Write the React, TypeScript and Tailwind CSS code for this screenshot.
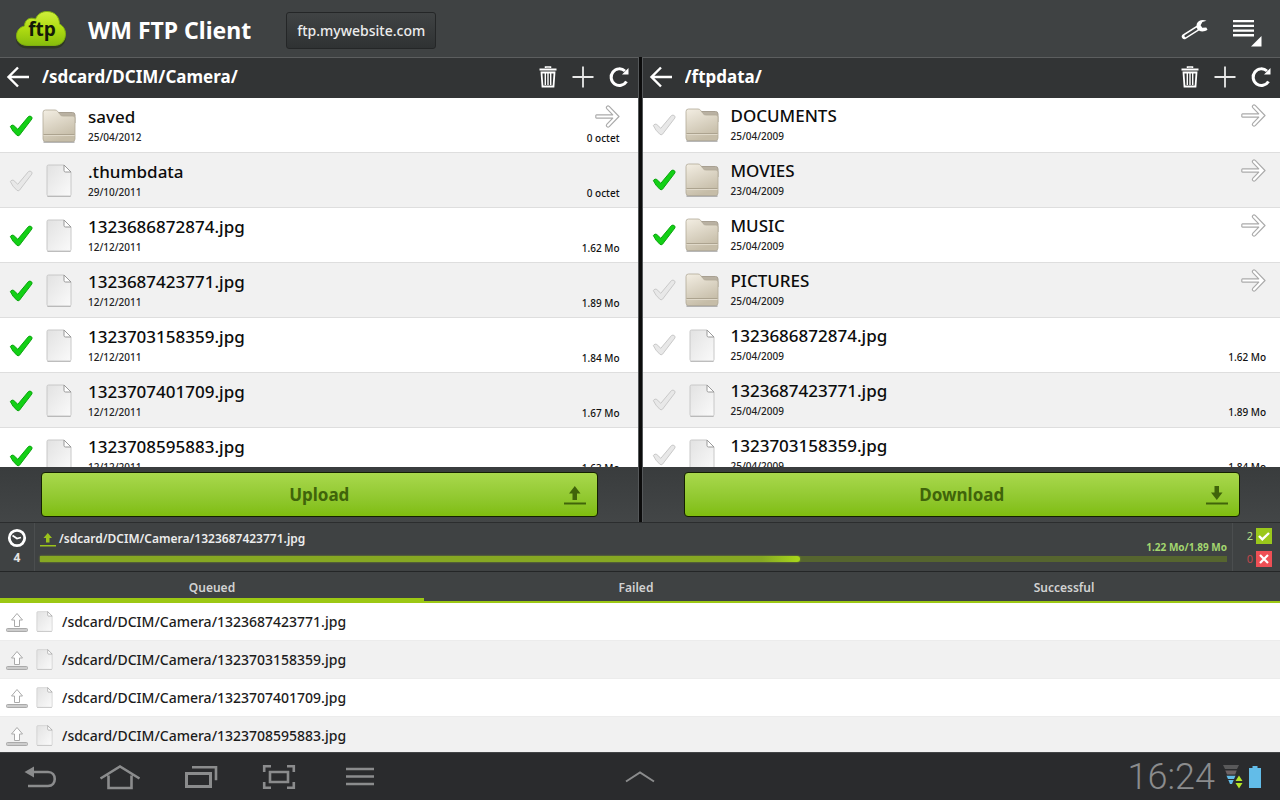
import { useState } from 'react';
import type { ReactNode } from 'react';

type Entry = {
  name: string;
  date: string;
  size?: string;
  folder?: boolean;
  checked?: boolean;
};

const localFiles: Entry[] = [
  { name: 'saved', date: '25/04/2012', size: '0 octet', folder: true, checked: true },
  { name: '.thumbdata', date: '29/10/2011', size: '0 octet' },
  { name: '1323686872874.jpg', date: '12/12/2011', size: '1.62 Mo', checked: true },
  { name: '1323687423771.jpg', date: '12/12/2011', size: '1.89 Mo', checked: true },
  { name: '1323703158359.jpg', date: '12/12/2011', size: '1.84 Mo', checked: true },
  { name: '1323707401709.jpg', date: '12/12/2011', size: '1.67 Mo', checked: true },
  { name: '1323708595883.jpg', date: '12/12/2011', size: '1.63 Mo', checked: true },
];

const remoteFiles: Entry[] = [
  { name: 'DOCUMENTS', date: '25/04/2009', folder: true },
  { name: 'MOVIES', date: '23/04/2009', folder: true, checked: true },
  { name: 'MUSIC', date: '25/04/2009', folder: true, checked: true },
  { name: 'PICTURES', date: '25/04/2009', folder: true },
  { name: '1323686872874.jpg', date: '25/04/2009', size: '1.62 Mo' },
  { name: '1323687423771.jpg', date: '25/04/2009', size: '1.89 Mo' },
  { name: '1323703158359.jpg', date: '25/04/2009', size: '1.84 Mo' },
];

const queue = [
  '/sdcard/DCIM/Camera/1323687423771.jpg',
  '/sdcard/DCIM/Camera/1323703158359.jpg',
  '/sdcard/DCIM/Camera/1323707401709.jpg',
  '/sdcard/DCIM/Camera/1323708595883.jpg',
];

function Gradients() {
  return (
    <svg width="0" height="0" className="absolute" aria-hidden="true">
      <defs>
        <linearGradient id="cloud" x1="0" y1="0" x2="0" y2="1">
          <stop offset="0" stopColor="#cfee3c" />
          <stop offset="0.5" stopColor="#b0dc12" />
          <stop offset="1" stopColor="#86bd0c" />
        </linearGradient>
        <linearGradient id="folder" x1="0" y1="0" x2="0.4" y2="1">
          <stop offset="0" stopColor="#f3eee3" />
          <stop offset="1" stopColor="#c6bda8" />
        </linearGradient>
        <linearGradient id="paper" x1="0" y1="0" x2="1" y2="1">
          <stop offset="0" stopColor="#e2e2e2" />
          <stop offset="1" stopColor="#fafafa" />
        </linearGradient>
      </defs>
    </svg>
  );
}

function Logo() {
  return (
    <svg width="54" height="42" viewBox="0 0 54 42" aria-hidden="true">
      <path
        d="M14 37.500C6 37.500 2 33 2 27.500c0-5 3-9 8-10 0-6 5-9.500 11-7.500C24 5 28 2.500 33 2.500c8 0 13 5.500 13 12.500 4 2 6 6 6 10.500C52 33 47 37.500 40 37.500Z"
        fill="#1f2d05"
        opacity="0.5"
        transform="translate(0 2)"
      />
      <path
        d="M14 36.500C6 36.500 2.500 32 2.500 27c0-5 3-9 8-10 0-6 5-9.500 11-7C24 4.500 28 2.500 33 2.500c8 0 12.500 5.500 12.500 12.500 4 2 6 6 6 10C51.500 32 47 36.500 40 36.500Z"
        fill="url(#cloud)"
        stroke="#7fae10"
      />
      <text
        x="28"
        y="27"
        textAnchor="middle"
        fontSize="19"
        fontWeight="700"
        fill="#141a08"
        className="font-['Open_Sans',sans-serif]"
      >
        ftp
      </text>
    </svg>
  );
}

function WrenchIcon() {
  return (
    <svg width="28" height="22" viewBox="0 0 28 22" fill="none" aria-hidden="true">
      <path d="M4.500 17.500 18 9" stroke="#fff" strokeWidth="5.400" strokeLinecap="round" />
      <path d="M5.500 17 16.500 10" stroke="#3f4243" strokeWidth="2.200" strokeLinecap="round" />
      <path
        d="M26.500 1.800C22.500 0 18 1.300 16.800 4.800c-.7 2.500.1 5.200 2.200 6.700 2.400 1.500 6 1 8.500-.7l-1.200-2.300-4 .3-1.700-2.600 1.800-3.200Z"
        fill="#fff"
      />
    </svg>
  );
}

function MenuIcon() {
  return (
    <svg width="30" height="29" viewBox="0 0 30 29" fill="#fff" aria-hidden="true">
      <path d="M1 2h21v2.300H1zM1 6.700h21V9H1zM1 11.400h21v2.300H1zM1 16.100h21v2.300H1z" />
      <path d="M29.500 18v10.500H19Z" />
    </svg>
  );
}

function BackArrow() {
  return (
    <svg width="24" height="22" viewBox="0 0 24 22" fill="none" stroke="#fff" strokeWidth="2.400" aria-hidden="true">
      <path d="M12 1.500 2.500 11l9.500 9.500M2.500 11H23" />
    </svg>
  );
}

function TrashIcon() {
  return (
    <svg width="18" height="22" viewBox="0 0 18 22" fill="none" stroke="#fff" aria-hidden="true">
      <path d="M6.500 2V1h5v1" strokeWidth="1.500" />
      <path d="M.5 3.500h17" strokeWidth="2" />
      <path d="M2.500 6.500 3.500 20.500h11L15.500 6.500Z" strokeWidth="1.800" />
      <path d="M6.300 7v12M9 7v12M11.700 7v12" strokeWidth="1.400" />
    </svg>
  );
}

function PlusIcon() {
  return (
    <svg width="22" height="22" viewBox="0 0 22 22" stroke="#e8e8e8" strokeWidth="1.800" aria-hidden="true">
      <path d="M11 .5v21M.5 11h21" />
    </svg>
  );
}

function ReloadIcon() {
  return (
    <svg width="20" height="22" viewBox="0 0 20 22" fill="none" aria-hidden="true">
      <path d="M17.500 15.500A8.300 8.300 0 1 1 16 5" stroke="#fff" strokeWidth="3" />
      <path d="M19.500 2V8.500H13Z" fill="#fff" />
    </svg>
  );
}

function FolderIcon() {
  return (
    <svg width="34" height="34" viewBox="0 0 34 34" aria-hidden="true">
      <path d="M1.500 33h31" stroke="#777" opacity="0.7" strokeWidth="1.500" />
      <path d="M12 3.500h18.500A2.500 2.500 0 0 1 33 6v8H12Z" fill="#b9b1a2" stroke="#a8a092" />
      <path
        d="M1 3.500A2.500 2.500 0 0 1 3.500 1H13q1.500 0 2.500 1.200l2.500 3.300q1 1.500 3 1.500h10a2 2 0 0 1 2 2v21a2.500 2.500 0 0 1-2.500 2.500h-27A2.500 2.500 0 0 1 1 30Z"
        fill="url(#folder)"
        stroke="#b1a998"
        strokeWidth="0.800"
      />
      <path d="M1.500 25.500h31" stroke="#aca38f" />
      <path d="M1.500 26.500h31" stroke="#e0d9c9" />
    </svg>
  );
}

function FileIcon({ small = false }: { small?: boolean }) {
  return (
    <svg
      width={small ? 17 : 26}
      height={small ? 21 : 33}
      viewBox="0 0 26 33"
      aria-hidden="true"
    >
      <path d="M1.500 32.300h23" stroke="#777" opacity="0.7" />
      <path
        d="M1 2.500A1.500 1.500 0 0 1 2.500 1H18l7 7v22.500a1.500 1.500 0 0 1-1.500 1.500h-21A1.500 1.500 0 0 1 1 30.500Z"
        fill="url(#paper)"
        stroke="#c8c8c8"
      />
      <path d="M18 1v5.500A1.500 1.500 0 0 0 19.500 8H25Z" fill="#fff" stroke="#999" />
    </svg>
  );
}

function OpenArrow() {
  return (
    <svg width="25" height="23" viewBox="0 0 26 24" fill="#fff" stroke="#aaa" strokeWidth="1.200" aria-hidden="true">
      <path
        d="M1.500 10.300h17l-6.300-6.600q-.9-1.300.2-2.300t2.400 0L25 12 14.800 22.600q-1.300 1-2.400 0t-.2-2.300l6.300-6.600h-17a.7.7 0 0 1-.7-.7v-2a.7.7 0 0 1 .7-.7Z"
        strokeLinejoin="round"
      />
    </svg>
  );
}

function Tick({ label, checked }: { label: string; checked: boolean }) {
  return (
    <label className="grid w-6 shrink-0 cursor-pointer">
      <input
        type="checkbox"
        aria-label={label}
        defaultChecked={checked}
        className="peer col-start-1 row-start-1 size-6 appearance-none"
      />
      <svg
        viewBox="0 0 24 24"
        className="col-start-1 row-start-1 size-6 fill-[#e8e8e8] stroke-[#c9c9c9] peer-checked:fill-[#13d016] peer-checked:stroke-[#0aa50d]"
        aria-hidden="true"
      >
        <path
          d="M1.300 12.500q1.700-2.400 3.500-1l4 3.800L19.500 2.500q1.500-1 3 .3 1 1 .3 2.300L10.500 21.200q-1.400 1.200-2.700 0Q3.500 17.500 1.300 12.500Z"
          strokeWidth="1"
          strokeLinejoin="round"
        />
      </svg>
    </label>
  );
}

function IconButton({ label, children, className = '' }: { label: string; children: ReactNode; className?: string }) {
  return (
    <button type="button" aria-label={label} className={`flex shrink-0 cursor-pointer items-center justify-center ${className}`}>
      {children}
    </button>
  );
}

function FileRow({ entry, inset }: { entry: Entry; inset: string }) {
  return (
    <li className={`flex h-[55px] shrink-0 border-b border-[#dedede] bg-white pl-[9px] even:bg-[#f1f1f1] ${inset}`}>
      <div className="flex items-center">
        <Tick label={entry.name} checked={!!entry.checked} />
        <span className="ml-2 flex w-9 justify-center">{entry.folder ? <FolderIcon /> : <FileIcon />}</span>
      </div>
      <div className="ml-[11px] min-w-0 flex-1 pt-[5px]">
        <div className="truncate text-[17px] leading-[26px] font-medium text-[#0c0c0c]">{entry.name}</div>
        <div className="text-[10px] leading-[14px] font-medium text-[#222]">{entry.date}</div>
      </div>
      <div className="flex flex-col items-end pt-[6px]">
        <div className="h-[26px]">
          {entry.folder && (
            <IconButton label={`Open ${entry.name}`}>
              <OpenArrow />
            </IconButton>
          )}
        </div>
        <span className="text-[10px] leading-[14px] font-medium text-[#111]">{entry.size}</span>
      </div>
    </li>
  );
}

function TransferArrow({ down = false }: { down?: boolean }) {
  return (
    <svg width="24" height="20" viewBox="0 0 24 20" className="fill-[#40640a]" aria-hidden="true">
      {down ? <path d="M9.500 1h4.500v6.500H17.500L11.800 15 6 7.500h3.500Z" /> : <path d="M9.500 15h4.500V8.500h3.500L11.800 1 6 8.500h3.500Z" />}
      <path d="M1 17.500h22v2H1z" />
    </svg>
  );
}

function Pane({ path, files, action, inset }: { path: string; files: Entry[]; action: 'Upload' | 'Download'; inset: string }) {
  return (
    <section className="flex min-w-0 flex-1 flex-col">
      <header className="flex h-[41px] shrink-0 items-center border-t border-[#5c5e5f] bg-[#323435] pr-[9px] pb-[3px] pl-[6px]">
        <IconButton label="Back">
          <BackArrow />
        </IconButton>
        <h2 className="ml-[12px] flex-1 truncate text-[17px] font-bold text-white">{path}</h2>
        <div className="flex items-center gap-[15px]">
          <IconButton label="Delete">
            <TrashIcon />
          </IconButton>
          <IconButton label="New folder">
            <PlusIcon />
          </IconButton>
          <IconButton label="Refresh">
            <ReloadIcon />
          </IconButton>
        </div>
      </header>
      <ul className="flex min-h-0 flex-1 flex-col overflow-hidden bg-white">
        {files.map((entry) => (
          <FileRow key={entry.name} entry={entry} inset={inset} />
        ))}
      </ul>
      <div className="h-[55px] shrink-0 bg-linear-to-b from-[#393c3d] to-[#434647] pt-[5px] pr-[40px] pl-[41px]">
        <button
          type="button"
          className="grid h-[45px] w-full cursor-pointer grid-cols-[1fr_auto_1fr] items-center rounded-[4px] border border-[#142000] bg-linear-to-b from-[#a9d84c] to-[#7fbd0c] px-[10px] text-[17px] font-bold text-[#40640a]"
        >
          <span className="col-start-2">{action}</span>
          <span className="justify-self-end">
            <TransferArrow down={action === 'Download'} />
          </span>
        </button>
      </div>
    </section>
  );
}

function StatusBar() {
  const percent = 64;
  return (
    <section className="flex h-[49px] shrink-0 border-t border-[#2b2d2e] bg-[#3f4243]">
      <div className="flex w-[35px] flex-col items-center border-r border-[#4b4e4f] pt-[5px]">
        <svg width="20" height="20" viewBox="0 0 20 20" fill="none" stroke="#fff" aria-hidden="true">
          <circle cx="10" cy="10" r="7.700" strokeWidth="2.800" />
          <path d="m5.500 7.500 4.500 3 4-1" strokeWidth="1.800" />
        </svg>
        <span className="text-[12px] leading-5 font-bold text-[#e4e4e4]">4</span>
      </div>
      <div className="flex min-w-0 flex-1 flex-col pr-[5px] pl-[5px]">
        <div className="flex h-[33px]">
          <div className="flex h-8 flex-1 items-center gap-[3px]">
            <svg width="16" height="15" viewBox="0 0 16 15" fill="#9bc31c" aria-hidden="true">
              <path d="M6 10.500h3.500V6H12L7.800 1 3.500 6H6zM0 13h16v1.500H0z" />
            </svg>
            <span className="text-[12px] font-semibold text-[#ececec]">/sdcard/DCIM/Camera/1323687423771.jpg</span>
          </div>
          <span className="self-end text-[10px] leading-[18px] font-bold text-[#a3d66f]">1.22 Mo/1.89 Mo</span>
        </div>
        <div role="progressbar" aria-label="Transfer progress" aria-valuenow={percent} className="h-[6px] bg-[#56652f]">
          <div
            className="h-full rounded-r-sm bg-linear-to-r from-[#86a823] from-95% to-[#a9d819] shadow-[0_0_2px_#8aae21]"
            style={{ width: `${percent}%` }}
          />
        </div>
      </div>
      <div className="flex w-12 flex-col gap-[7px] border-l border-[#4b4e4f] pt-[5px] pr-2 text-[11px]">
        <div className="flex items-center justify-end gap-[3px] leading-4 text-[#b9e08a]">
          2
          <svg width="16" height="16" viewBox="0 0 16 16" fill="none" stroke="#fff" strokeWidth="2.400" aria-hidden="true">
            <rect width="16" height="16" fill="#9ac81c" stroke="none" />
            <path d="m3 8 3.300 3.300L13 5" />
          </svg>
        </div>
        <div className="flex items-center justify-end gap-[3px] leading-4 text-[#c2474b]">
          0
          <svg width="16" height="16" viewBox="0 0 16 16" fill="none" stroke="#fff" strokeWidth="2.200" aria-hidden="true">
            <rect width="16" height="16" fill="#ee4f55" stroke="none" />
            <path d="m4 4 8 8m0-8-8 8" />
          </svg>
        </div>
      </div>
    </section>
  );
}

const tabs = ['Queued', 'Failed', 'Successful'];

function Transfers() {
  const [active, setActive] = useState('Queued');
  return (
    <section className="shrink-0">
      <div
        role="tablist"
        className="grid h-8 grid-cols-[424fr_424fr_432fr] border-t border-b-2 border-t-[#242627] border-b-[#9cc814] bg-[#3f4243]"
      >
        {tabs.map((tab) => (
          <button
            key={tab}
            type="button"
            role="tab"
            aria-selected={tab === active}
            onClick={() => setActive(tab)}
            className="cursor-pointer border-b-3 border-transparent pt-[6px] text-[12px] leading-5 font-semibold text-[#d2d2d2] aria-selected:border-[#9cc814]"
          >
            {tab}
          </button>
        ))}
      </div>
      <ul className="h-[149px] overflow-hidden bg-white">
        {queue.map((path) => (
          <li key={path} className="flex h-[38px] items-center border-b border-[#ececec] pl-[6px] even:bg-[#f1f1f1]">
            <svg width="22" height="20" viewBox="0 0 22 20" fill="#fff" stroke="#aaa" aria-hidden="true">
              <path d="M8.500 14.500V8H5.500L11 1.500 16.500 8H13.500v6.500Z" strokeLinejoin="round" />
              <rect x="0.500" y="16.500" width="21" height="3" rx="1" fill="#ccc" />
            </svg>
            <span className="ml-2">
              <FileIcon small />
            </span>
            <span className="ml-[9px] text-[14px] font-medium text-[#1c1c1c]">{path}</span>
          </li>
        ))}
      </ul>
    </section>
  );
}

function SystemBar() {
  return (
    <nav className="grid h-12 shrink-0 grid-cols-[1fr_auto_1fr] items-center border-t border-[#424446] bg-[#2a2b2d]">
      <div className="flex items-center pl-[23px]">
        <IconButton label="Go back" className="w-[34px]">
          <svg width="34" height="24" viewBox="0 0 34 24" fill="none" stroke="#8b8c8d" strokeWidth="2.600" aria-hidden="true">
            <path d="M9 7h16c9 0 9 14 0 14H5" />
            <path d="M1.500 7 11 1.500v11Z" fill="#8b8c8d" stroke="none" />
          </svg>
        </IconButton>
        <IconButton label="Home" className="ml-[42px] w-[42px]">
          <svg width="42" height="26" viewBox="0 0 42 26" fill="none" stroke="#8b8c8d" strokeWidth="2.600" aria-hidden="true">
            <path d="M1.500 14.500 21 2.500l19.500 12M9.500 11.500V24h23V11.500" />
          </svg>
        </IconButton>
        <IconButton label="Recent apps" className="ml-[43px] w-[34px]">
          <svg width="34" height="24" viewBox="0 0 34 24" fill="none" stroke="#8b8c8d" aria-hidden="true">
            <path d="M2.500 8.500h24v13h-24Z" strokeWidth="3" />
            <path d="M8 2.200h24v13" strokeWidth="2.600" />
          </svg>
        </IconButton>
        <IconButton label="Screenshot" className="ml-[44px] w-[34px]">
          <svg width="34" height="26" viewBox="0 0 34 26" fill="none" stroke="#8b8c8d" strokeWidth="2.600" aria-hidden="true">
            <path d="M2.200 8V2.200H9M25 2.200h6.800V8M31.800 18v5.800H25M9 23.800H2.200V18" />
            <path d="M8 8h18v10H8Z" />
          </svg>
        </IconButton>
        <IconButton label="Menu" className="ml-[50px] w-7">
          <svg width="28" height="22" viewBox="0 0 28 22" stroke="#8b8c8d" strokeWidth="2.400" aria-hidden="true">
            <path d="M0 3h28M0 10.500h28M0 18h28" />
          </svg>
        </IconButton>
      </div>
      <IconButton label="Show tray">
        <svg width="30" height="14" viewBox="0 0 30 14" fill="none" stroke="#8b8c8d" strokeWidth="2" aria-hidden="true">
          <path d="m1 11.500 14-9 14 9" />
        </svg>
      </IconButton>
      <div className="flex items-center justify-end pr-[19px]">
        <time className="font-[Roboto,sans-serif] text-[36px] leading-none font-light text-[#8b8c8d]">16:24</time>
        <svg width="20" height="25" viewBox="0 0 20 25" className="ml-[8px]" aria-hidden="true">
          <path d="M0 1h16l-2 4H2Z" fill="#59595a" />
          <path d="M2.300 6.500h11.400l-1.500 4H4Z" fill="#6d6264" />
          <path d="M3.500 11.700h9l-1.500 3.300h-6ZM5.300 16h5.400L9 20H7Z" fill="#62bce8" />
          <path d="m16 11.500 3.500 5.500h-7ZM16 24.500l3.500-5.500h-7Z" fill="#b4e62a" />
        </svg>
        <svg width="12" height="22" viewBox="0 0 12 22" fill="#62bce8" className="ml-[6px]" aria-hidden="true">
          <path d="M3.500 0h5v2H12v20H0V2h3.500Z" />
        </svg>
      </div>
    </nav>
  );
}

export default function App() {
  return (
    <div className="flex h-screen min-w-[800px] flex-col overflow-hidden bg-[#3f4243] font-['Noto_Sans','Open_Sans',sans-serif]">
      <Gradients />
      <header className="flex h-[57px] shrink-0 items-center pt-[3px] pr-[18px] pl-[14px]">
        <Logo />
        <h1 className="ml-5 text-[23px] font-bold text-white">WM FTP Client</h1>
        <button
          type="button"
          className="ml-[35px] h-[37px] cursor-pointer rounded-[3px] border border-[#242627] bg-linear-to-b from-[#404344] to-[#2f3233] px-[10px] text-[14px] font-medium text-[#ececec]"
        >
          ftp.mywebsite.com
        </button>
        <div className="ml-auto flex items-center gap-[24px]">
          <IconButton label="Settings">
            <WrenchIcon />
          </IconButton>
          <IconButton label="Options" className="pt-1">
            <MenuIcon />
          </IconButton>
        </div>
      </header>
      <main className="flex min-h-0 flex-1">
        <Pane path="/sdcard/DCIM/Camera/" files={localFiles} action="Upload" inset="pt-px pr-[18px]" />
        <div className="w-[5px] shrink-0 border-x border-[#55585a] bg-[#0c0c0c]" />
        <Pane path="/ftpdata/" files={remoteFiles} action="Download" inset="pr-[14px]" />
      </main>
      <StatusBar />
      <Transfers />
      <SystemBar />
    </div>
  );
}
